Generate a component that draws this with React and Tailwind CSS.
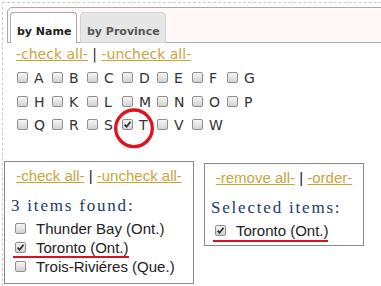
import React from "react";

const rows = [
  ["A", "B", "C", "D", "E", "F", "G"],
  ["H", "K", "L", "M", "N", "O", "P"],
  ["Q", "R", "S", "T", "V", "W"],
];

// small grey checkbox, like the old IE style ones
function Box({ checked }) {
  return (
    <span className="flex h-[11px] w-[11px] shrink-0 items-center justify-center rounded-[2px] border border-[#8e8e8e] bg-linear-to-b from-[#f6f6f6] to-[#d2d2d2]">
      {checked && (
        <svg width="9" height="9" viewBox="0 0 9 9">
          <path d="M1.6 4.6 L3.6 6.8 L7.5 1.8" fill="none" stroke="#2a2a2a" strokeWidth="1.7" />
        </svg>
      )}
    </span>
  );
}

function Links({ left, right }) {
  return (
    <div className="text-center text-[15px] leading-[18px]">
      <a href="#" className="text-[#c9a53a] underline">{left}</a>
      <span className="text-[#222]"> | </span>
      <a href="#" className="text-[#c9a53a] underline">{right}</a>
    </div>
  );
}

function Item({ label, checked }) {
  return (
    <div className="flex h-[19px] items-center gap-[10px] pl-[10px] text-[15px] leading-[19px] text-[#222]">
      <Box checked={checked} />
      <span>{label}</span>
    </div>
  );
}

export default function App() {
  return (
    <div className="relative h-[286px] w-[381px] overflow-hidden bg-white">
      <div className="ml-[2px] mt-[2px] h-[284px] w-[420px] border-l border-t border-dashed border-[#cccccc] pt-[4px]">
        {/* tab header */}
        <div className="ml-[4px] flex h-[36px] items-end gap-[3px] rounded-tl-[5px] border border-[#aaaaaa] bg-[#fff8f7] pl-[2px] font-['DejaVu_Sans'] text-[11px] font-bold leading-[16px]">
          <div className="-mb-px h-[31px] w-[67px] rounded-t-[4px] border border-b-0 border-[#aaaaaa] bg-white pl-[6px] pt-[11px] text-[#212121]">
            by Name
          </div>
          <div className="-mb-px h-[31px] w-[86px] rounded-t-[4px] border border-[#d3d3d3] bg-[#e6e6e6] pl-[6px] pt-[11px] text-[#555555]">
            by Province
          </div>
        </div>

        <div className="font-['DejaVu_Sans'] text-[14px] leading-[17px]">
          <div className="mt-[3px] pl-[13px]">
            <a href="#" className="text-[#c9a53a] underline">-check all-</a>
            <span className="text-[#333]"> | </span>
            <a href="#" className="text-[#c9a53a] underline">-uncheck all-</a>
          </div>

          <div className="mt-[4px] pl-[14px] text-[#333]">
            {rows.map((row, i) => (
              <div key={i} className="grid grid-cols-[repeat(7,35px)] leading-[23.5px]">
                {row.map((l) => (
                  <div key={l} className="flex items-center gap-[6px]">
                    <span className="-mt-[2px]">
                      <Box checked={l === "T"} />
                    </span>
                    <span>{l}</span>
                  </div>
                ))}
              </div>
            ))}
          </div>
        </div>

        {/* result boxes */}
        <div className="mt-[23px] flex items-start gap-[10px] pl-[1px] font-['Liberation_Sans']">
          <div className="h-[123px] w-[190px] border border-[#8a8a8a] pt-[5px]">
            <Links left="-check all-" right="-uncheck all-" />
            <div className="mt-[10px] pl-[6px] font-['Liberation_Serif'] text-[17px] leading-[22px] tracking-[1.8px] text-[#1b3a6b]">
              3 items found:
            </div>
            <div className="mt-[2px]">
              <Item label="Thunder Bay (Ont.)" />
              <Item label="Toronto (Ont.)" checked />
              <Item label="Trois-Riviéres (Que.)" />
            </div>
          </div>

          <div className="mt-[2px] h-[83px] w-[160px] border border-[#8a8a8a] pt-[5px]">
            <Links left="-remove all-" right="-order-" />
            <div className="mt-[10px] pl-[6px] font-['Liberation_Serif'] text-[17px] leading-[22px] tracking-[1.8px] text-[#1b3a6b]">
              Selected items:
            </div>
            <div className="mt-[2px]">
              <Item label="Toronto (Ont.)" checked />
            </div>
          </div>
        </div>
      </div>

      {/* red annotations */}
      <svg className="absolute left-[112px] top-[106px]" width="44" height="45" viewBox="0 0 44 45">
        <ellipse cx="22" cy="22.3" rx="18.3" ry="18.3" fill="none" stroke="#e0141e" strokeWidth="3.4" />
      </svg>
      <div className="absolute left-[13px] top-[256px] h-[2px] w-[116px] bg-[#d7141e]" />
      <div className="absolute left-[213px] top-[240px] h-[2px] w-[115px] bg-[#d7141e]" />
    </div>
  );
}
